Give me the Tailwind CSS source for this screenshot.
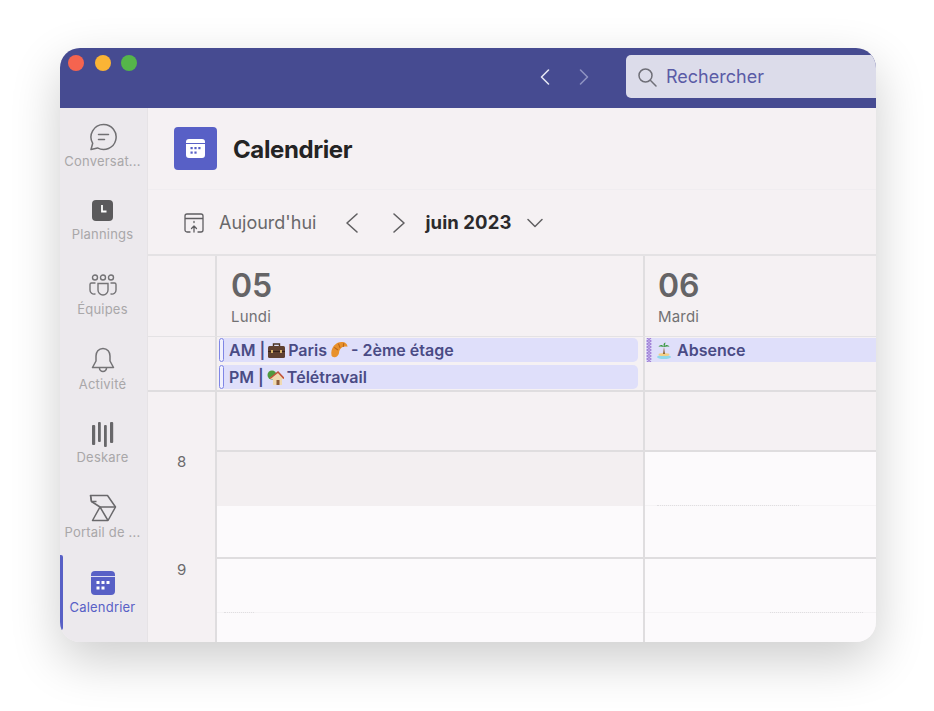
<!DOCTYPE html>
<html lang="fr">
<head>
    <meta charset="UTF-8">
    <title>Calendrier</title>
    <script src="https://cdn.jsdelivr.net/npm/@tailwindcss/browser@4"></script>
</head>
<body class="bg-white w-[934px] h-[711px] overflow-hidden pt-[48px] pl-[60px] font-['Inter','Liberation_Sans',sans-serif]">
    <div class="w-[816px] h-[594px] rounded-[20px] overflow-hidden flex flex-col bg-[#f5f1f3] shadow-[0_18px_50px_rgba(0,0,0,0.2)]">

        <!-- barre de titre -->
        <header class="relative h-[60px] shrink-0 bg-[#464b91] flex items-center">
            <div class="absolute left-[8px] top-[7px] flex gap-[10.500px]">
                <span class="w-4 h-4 rounded-full bg-[#f5644f]"></span>
                <span class="w-4 h-4 rounded-full bg-[#fbb435]"></span>
                <span class="w-4 h-4 rounded-full bg-[#55b54a]"></span>
            </div>
            <div class="ml-[478px] flex items-center gap-[25px] mt-[-3px]">
                <svg class="w-[14px] h-[18px]" viewBox="0 0 14 18" fill="none" stroke="#e4e5f3" stroke-width="1.6" stroke-linecap="round" stroke-linejoin="round"><path d="M10.5 2 3.5 9l7 7"/></svg>
                <svg class="w-[14px] h-[18px]" viewBox="0 0 14 18" fill="none" stroke="#8e92c2" stroke-width="1.6" stroke-linecap="round" stroke-linejoin="round"><path d="M3.5 2l7 7-7 7"/></svg>
            </div>
            <div class="ml-[35px] mt-[-3px] flex-1 h-[43px] rounded-l-[5px] bg-[#dcdcea] flex items-center pl-[11px] gap-[9px]">
                <svg class="w-[20px] h-[20px]" viewBox="0 0 20 20" fill="none" stroke="#6f6f78" stroke-width="1.5" stroke-linecap="round"><circle cx="8.5" cy="8.5" r="6.5"/><path d="M13.3 13.3 19 19"/></svg>
                <span class="text-[18px] text-[#5a5ba6]">Rechercher</span>
            </div>
        </header>

        <div class="flex flex-1 min-h-0">
            <!-- barre laterale -->
            <nav class="relative w-[88px] shrink-0 bg-[#ece9ed] border-r border-[#e6e3e6] pr-[2px] flex flex-col items-center text-[13px] leading-[16px] tracking-[0.2px] text-[#a9a7a9]">
                <div class="h-[78px] pt-[14px] flex flex-col items-center gap-[1px] w-full">
                    <svg class="w-[30px] h-[30px]" viewBox="0 0 30 30" fill="none" stroke="#717073" stroke-width="1.5" stroke-linecap="round" stroke-linejoin="round"><path d="M15.5 2.500a12.500 12.500 0 1 1-6 23.400L3 27.500l1.700-6.200A12.500 12.500 0 0 1 15.500 2.500z"/><path d="M10.500 12.500h10M10.500 17.500h6"/></svg>
                    <span class="whitespace-nowrap">Conversat...</span>
                </div>
                <div class="h-[74px] pt-[14px] flex flex-col items-center gap-[5px] w-full">
                    <svg class="w-[21px] h-[21px]" viewBox="0 0 21 21"><rect width="21" height="21" rx="4" fill="#5b5a5c"/><path d="M10 5v6.500h4.500" fill="none" stroke="#fff" stroke-width="1.800"/></svg>
                    <span>Plannings</span>
                </div>
                <div class="h-[75px] pt-[14px] flex flex-col items-center gap-[3px] w-full">
                    <svg class="w-[28px] h-[24px]" viewBox="0 0 28 24" fill="none" stroke="#747376" stroke-width="1.400" stroke-linecap="round"><circle cx="6" cy="3.500" r="2.500"/><circle cx="14" cy="3.500" r="2.500"/><circle cx="22" cy="3.500" r="2.500"/><path d="M9 9.500H19V16A5 5 0 0 1 9 16z"/><path d="M6 9H2.500A1.500 1.500 0 0 0 1 10.500V16a4 4 0 0 0 5 4"/><path d="M22 9h3.500A1.500 1.500 0 0 1 27 10.500V16a4 4 0 0 1-5 4"/></svg>
                    <span>Équipes</span>
                </div>
                <div class="h-[74px] pt-[12px] flex flex-col items-center gap-[2px] w-full">
                    <svg class="w-[24px] h-[27px]" viewBox="0 0 24 27" fill="none" stroke="#747376" stroke-width="1.500" stroke-linecap="round" stroke-linejoin="round"><path d="M12 1.500c-4.500 0-7 3.500-7 7.500v5l-3.500 6.500h21L19 14V9c0-4-2.500-7.500-7-7.500z"/><path d="M8.500 21a3.500 3.500 0 0 0 7 0"/></svg>
                    <span>Activité</span>
                </div>
                <div class="h-[74px] pt-[12px] flex flex-col items-center gap-[2px] w-full">
                    <svg class="w-[22px] h-[26px]" viewBox="0 0 22 26" fill="#68676a"><rect x="0" y="4" width="3.200" height="20" rx="1"/><rect x="6" y="1" width="2.800" height="20" rx="1"/><rect x="12" y="4" width="2.800" height="22" rx="1"/><rect x="18" y="1" width="3.200" height="21" rx="1"/></svg>
                    <span>Deskare</span>
                </div>
                <div class="h-[72px] pt-[11px] flex flex-col items-center gap-[2px] w-full">
                    <svg class="w-[28px] h-[28px]" viewBox="0 0 28 28" fill="none" stroke="#69686b" stroke-width="1.500" stroke-linejoin="round"><path d="M1.500 1.500H18.500L26.500 13 19 26.500H3.500L11 13 2.500 7.500z"/><path d="M11 13H26.500M11 13l8 13.500M1.500 1.500l1 6h5"/></svg>
                    <span class="whitespace-nowrap">Portail de ...</span>
                </div>
                <div class="relative h-[87px] pt-[16px] flex flex-col items-center gap-[4px] w-full text-[#5860c6]">
                    <span class="absolute left-0 top-0 w-[3px] h-[75px] rounded-r-[2px] bg-[#5860c6]"></span>
                    <svg class="w-[24px] h-[24px]" viewBox="0 0 24 24"><rect width="24" height="24" rx="4" fill="#5860c6"/><path d="M0 5.500h24" stroke="#fff" stroke-width="0.800"/><g fill="#fff"><rect x="5.500" y="10" width="3" height="3"/><rect x="10.500" y="10" width="3" height="3"/><rect x="15.500" y="10" width="3" height="3"/><rect x="5.500" y="15.500" width="3" height="3"/><rect x="10.500" y="15.500" width="3" height="3"/></g></svg>
                    <span>Calendrier</span>
                </div>
            </nav>

            <!-- contenu -->
            <main class="flex-1 min-w-0 flex flex-col">
                <div class="h-[82px] shrink-0 flex items-start pl-[26px] pt-[19px] gap-[16px] border-b border-[#f0edf0]">
                    <div class="w-[43px] h-[43px] rounded-[4px] bg-[#5860c6] flex items-center justify-center">
                        <svg class="w-[19px] h-[19px]" viewBox="0 0 19 19"><path d="M3 0h13a3 3 0 0 1 3 3v1H0V3a3 3 0 0 1 3-3zM0 5h19v11a3 3 0 0 1-3 3H3a3 3 0 0 1-3-3z" fill="#fff"/><g fill="#5860c6"><rect x="4.500" y="8" width="2.200" height="2.200"/><rect x="8.400" y="8" width="2.200" height="2.200"/><rect x="12.300" y="8" width="2.200" height="2.200"/><rect x="4.500" y="12.500" width="2.200" height="2.200"/><rect x="8.400" y="12.500" width="2.200" height="2.200"/></g></svg>
                    </div>
                    <h1 class="mt-[1px] text-[24px] leading-[43px] tracking-[-0.4px] font-bold text-[#242424]">Calendrier</h1>
                </div>
                <div class="h-[66px] shrink-0 flex items-center pl-[36px] pt-[1px] border-b-2 border-[#e4e2e4]">
                    <svg class="w-[20px] h-[20px]" viewBox="0 0 20 20" fill="none" stroke="#5f5e61" stroke-width="1.300" stroke-linecap="round" stroke-linejoin="round"><path d="M6 19H3a2 2 0 0 1-2-2V3a2 2 0 0 1 2-2h14a2 2 0 0 1 2 2v14a2 2 0 0 1-2 2h-3M1 5.500h18M10 19v-6M7.500 15.500 10 13l2.500 2.500M10 8.500v1"/></svg>
                    <span class="ml-[15px] text-[18px] text-[#69686a]">Aujourd'hui</span>
                    <svg class="ml-[29px] w-[14px] h-[22px]" viewBox="0 0 14 22" fill="none" stroke="#616062" stroke-width="1.600" stroke-linecap="round" stroke-linejoin="round"><path d="M12 2 2 11l10 9"/></svg>
                    <svg class="ml-[33px] w-[14px] h-[22px]" viewBox="0 0 14 22" fill="none" stroke="#616062" stroke-width="1.600" stroke-linecap="round" stroke-linejoin="round"><path d="M2 2l10 9-10 9"/></svg>
                    <span class="ml-[19px] mt-[1px] text-[18.500px] tracking-[0.1px] font-bold text-[#2b2a2c]">juin 2023</span>
                    <svg class="ml-[16px] w-[16px] h-[10px]" viewBox="0 0 16 10" fill="none" stroke="#616062" stroke-width="1.500" stroke-linecap="round" stroke-linejoin="round"><path d="M1 1.500 8 8.500l7-7"/></svg>
                </div>

                <!-- entetes des jours -->
                <div class="h-[81px] shrink-0 grid grid-cols-[69px_428px_1fr] border-b border-[#e4e2e4]">
                    <div class="border-r-2 border-[#e0dee0]"></div>
                    <div class="border-r-2 border-[#e0dee0] pl-[14px] pt-[11px]">
                        <div class="text-[32px] leading-[38px] font-semibold text-[#656466]">05</div>
                        <div class="text-[15px] leading-[20px] mt-[2px] tracking-[0.2px] text-[#727173]">Lundi</div>
                    </div>
                    <div class="pl-[13px] pt-[11px]">
                        <div class="text-[32px] leading-[38px] font-semibold text-[#656466]">06</div>
                        <div class="text-[15px] leading-[20px] mt-[2px] tracking-[0.2px] text-[#727173]">Mardi</div>
                    </div>
                </div>

                <!-- journee entiere -->
                <div class="h-[55px] shrink-0 grid grid-cols-[69px_428px_1fr] border-b-2 border-[#dfdddf] text-[16px] font-semibold text-[#4a4b85]">
                    <div class="border-r-2 border-[#e0dee0]"></div>
                    <div class="border-r-2 border-[#e0dee0] pl-[2px] pr-[5px] pt-[1px] flex flex-col gap-[3px]">
                        <div class="h-[24px] rounded-[5px] bg-[#dfdffa] flex items-center">
                            <span class="w-[5px] h-[24px] rounded-[3px] border border-[#7f86e6] bg-[#f1f1fd]"></span>
                            <span class="ml-[5px] flex items-center gap-[3px] whitespace-nowrap">AM | 
                                <svg class="w-[17px] h-[15px]" viewBox="0 0 17 15"><path d="M5.500 3V1h6v2" fill="none" stroke="#4a3222" stroke-width="1.400"/><rect y="3" width="17" height="12" rx="1.500" fill="#5f4030"/><rect y="8" width="17" height="1" fill="#35221a"/><rect x="3" y="7" width="2" height="3" fill="#d8b36a"/><rect x="12" y="7" width="2" height="3" fill="#d8b36a"/></svg>
                                Paris
                                <svg class="w-[18px] h-[18px]" viewBox="0 0 17 17"><path d="M1.500 14C0 7 5 1 11 1c3.500 0 5.500 2 5.500 4.500-2-.5-3.500-.5-5 .5S8.500 9 8.500 11.500c-.5 1.500-1.500 3-3 3.500-1.500.5-3 .5-4-1z" fill="#e8912c"/><path d="M4 6l3.500 2.500M8 2.500l1.500 4M13 2l-.5 3.500" stroke="#b9651b" stroke-width="1"/></svg>
                                - 2ème étage</span>
                        </div>
                        <div class="h-[24px] rounded-[5px] bg-[#dfdffa] flex items-center">
                            <span class="w-[5px] h-[24px] rounded-[3px] border border-[#7f86e6] bg-[#f1f1fd]"></span>
                            <span class="ml-[5px] flex items-center gap-[3px] whitespace-nowrap">PM | 
                                <svg class="w-[17px] h-[17px]" viewBox="0 0 17 17"><circle cx="5" cy="6" r="4.500" fill="#4e9a3f"/><path d="M3 9 11 3l6 6v1h-2v6H6v-6H3z" fill="#f0d9b0"/><path d="M3 9.500 11 3l6 6.500" fill="none" stroke="#c0523a" stroke-width="1.600"/><rect x="9.500" y="11" width="3" height="5" fill="#8a5a38"/></svg>
                                Télétravail</span>
                        </div>
                    </div>
                    <div class="pl-[1px] pt-[1px]">
                        <div class="h-[24px] bg-[#dfdffa] flex items-center">
                            <svg class="w-[6px] h-[24px]" viewBox="0 0 6 24" fill="none" stroke="#a07fd6" stroke-width="1.200"><path d="M1 0 5 3 1 6l4 3-4 3 4 3-4 3 4 3-4 3M5 0 1 3l4 3-4 3 4 3-4 3 4 3-4 3 4 3"/></svg>
                            <span class="ml-[5px] flex items-center gap-[6px] whitespace-nowrap">
                                <svg class="w-[14px] h-[17px]" viewBox="0 0 14 17"><ellipse cx="7" cy="15" rx="7" ry="2" fill="#8fd8ea"/><ellipse cx="7" cy="12.500" rx="5.500" ry="1.500" fill="#f3cf85"/><path d="M7 5 8 12H6z" fill="#8c6239"/><path d="M7 5C5 2 2.500 3 1.500 5 4 4 5.500 5 7 5zM7 5c2-3 4.500-2 5.500 0C10 4 8.500 5 7 5zM7 5C6 2.500 6.500 1 8.500 .5 8 2.500 8 4 7 5z" fill="#3d9a46"/></svg>
                                Absence</span>
                        </div>
                    </div>
                </div>

                <!-- grille des heures -->
                <div class="flex-1 min-h-0 grid grid-cols-[69px_428px_1fr] grid-rows-[60px_107px_1fr]">
                    <div class="border-r-2 border-[#dfdddf]"></div>
                    <div class="border-r-2 border-[#dfdddf] border-b-2 border-b-[#dfdddf]"></div>
                    <div class="border-b-2 border-[#dfdddf]"></div>

                    <div class="relative border-r-2 border-[#dfdddf]"><span class="absolute left-[29px] top-[0px] text-[15px] leading-[20px] text-[#6b6a6c]">8</span></div>
                    <div class="border-r-2 border-[#dfdddf] border-b-2 border-b-[#dfdddf] flex flex-col">
                        <div class="h-[54px] bg-[#f3eff1]"></div>
                        <div class="flex-1 bg-[#fcfafc]"></div>
                    </div>
                    <div class="relative bg-[#fcfafc] border-b-2 border-[#dfdddf]">
                        <div class="h-[54px] border-b border-[#f5f3f5]"></div>
                        <span class="absolute left-[12px] top-[53px] w-[142px] border-t border-dotted border-[#e0dee1]"></span>
                    </div>

                    <div class="relative border-r-2 border-[#dfdddf]"><span class="absolute left-[29px] top-[1px] text-[15px] leading-[20px] text-[#6b6a6c]">9</span></div>
                    <div class="relative border-r-2 border-[#dfdddf] bg-[#fcfafc]">
                        <div class="h-[54px] border-b border-[#f5f3f5]"></div>
                        <span class="absolute left-[7px] top-[53px] w-[30px] border-t border-dotted border-[#e0dee1]"></span>
                    </div>
                    <div class="relative bg-[#fcfafc]">
                        <div class="h-[54px] border-b border-[#f5f3f5]"></div>
                        <span class="absolute left-[125px] top-[53px] w-[93px] border-t border-dotted border-[#e0dee1]"></span>
                    </div>
                </div>
            </main>
        </div>
    </div>
</body>
</html>
